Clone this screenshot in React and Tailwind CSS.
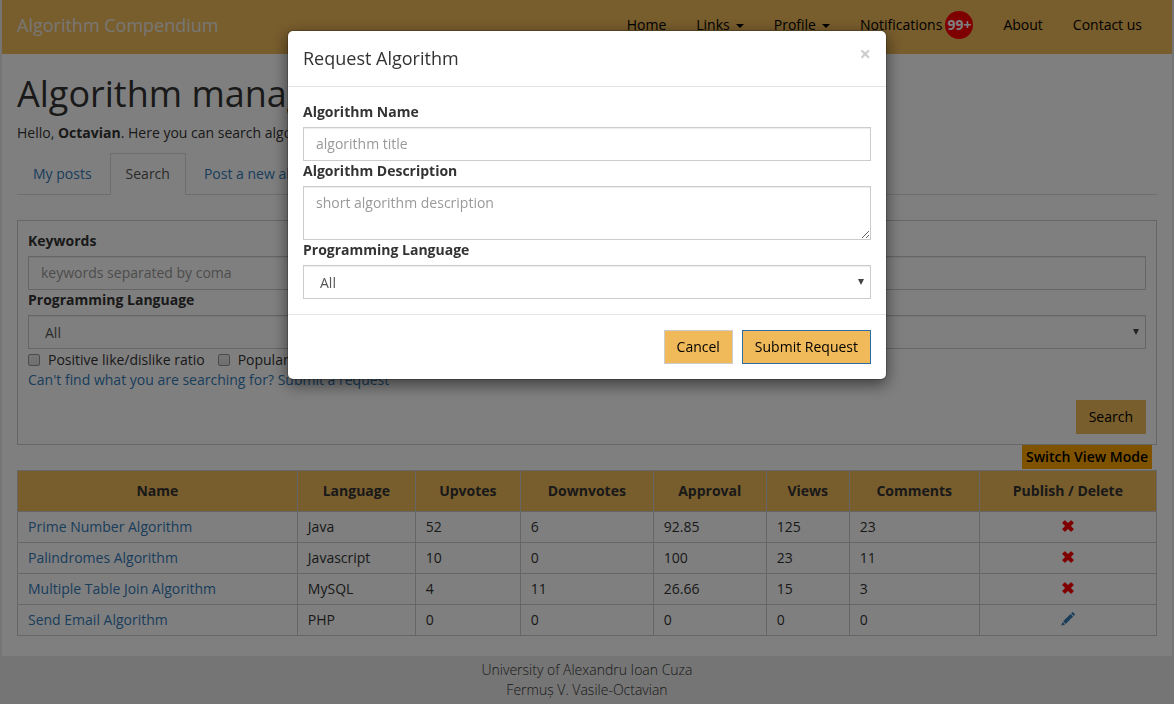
import React from "react";

const rows = [
  ["Prime Number Algorithm", "Java", "52", "6", "92.85", "125", "23", "delete"],
  ["Palindromes Algorithm", "Javascript", "10", "0", "100", "23", "11", "delete"],
  ["Multiple Table Join Algorithm", "MySQL", "4", "11", "26.66", "15", "3", "delete"],
  ["Send Email Algorithm", "PHP", "0", "0", "0", "0", "0", "publish"],
];

const columns = [
  ["Name", "w-[24.57%]"],
  ["Language", "w-[10.36%]"],
  ["Upvotes", "w-[9.22%]"],
  ["Downvotes", "w-[11.67%]"],
  ["Approval", "w-[9.92%]"],
  ["Views", "w-[7.28%]"],
  ["Comments", "w-[11.42%]"],
  ["Publish / Delete", "w-[15.56%]"],
];

const field =
  "block w-full border border-[#ccc] bg-white px-3 text-sm leading-5 text-[#555] placeholder-[#999] shadow-[inset_0_1px_1px_rgba(0,0,0,0.075)] outline-none";

function Caret() {
  return (
    <svg className="ml-1.5 inline-block h-1 w-2 align-middle" viewBox="0 0 8 4" aria-hidden="true">
      <path d="M0 0h8L4 4z" fill="currentColor" />
    </svg>
  );
}

function CrossIcon() {
  return (
    <svg className="h-3 w-3" viewBox="0 0 12 12" aria-hidden="true">
      <path
        d="M3.300.4 6 3.100 8.700.4q.4-.4.800 0l2.100 2.100q.4.400 0 .800L8.900 6l2.700 2.700q.4.400 0 .800L9.500 11.600q-.4.400-.8 0L6 8.900l-2.700 2.700q-.4.400-.8 0L.4 9.500q-.4-.4 0-.8L3.100 6 .4 3.300q-.4-.4 0-.8L2.500.4q.4-.4.800 0z"
        fill="#f00"
      />
    </svg>
  );
}

function PencilIcon() {
  return (
    <svg className="h-3.5 w-3.5" viewBox="0 0 14 14" fill="#337ab7" aria-hidden="true">
      <path d="M11 .4q.6-.6 1.200 0l1.400 1.400q.6.600 0 1.200l-.9.900L10.100 1.300z" />
      <path d="M9.500 1.900 12.100 4.500 4.700 11.900 2.100 9.300z" />
      <path d="M1.500 9.900 4.100 12.500.2 13.800z" />
    </svg>
  );
}

function LanguageSelect({ id }) {
  return (
    <div className="relative">
      <select id={id} className={`${field} h-[34px] appearance-none pt-0.5 pl-4`}>
        <option>All</option>
        <option>Java</option>
        <option>Javascript</option>
        <option>MySQL</option>
        <option>PHP</option>
      </select>
      <svg
        className="pointer-events-none absolute top-3.5 right-[7px] h-1.5 w-1.5"
        viewBox="0 0 6 6"
        aria-hidden="true"
      >
        <path d="M0 0h6L3 6z" fill="#444" />
      </svg>
    </div>
  );
}

function Label({ htmlFor, children }) {
  return (
    <label htmlFor={htmlFor} className="mb-[5px] block font-bold">
      {children}
    </label>
  );
}

function Check({ children }) {
  return (
    <label className="flex items-center gap-2">
      <input
        type="checkbox"
        className="h-3 w-3 appearance-none rounded-xs border border-[#999] bg-linear-to-b from-[#eee] to-[#ddd]"
      />
      {children}
    </label>
  );
}

function Navbar() {
  return (
    <header className="flex h-[54px] justify-between bg-[#f0ba5a] px-[15px] pb-1">
      <a href="#" className="flex items-center text-lg font-medium text-[#f1efe9]">
        Algorithm Compendium
      </a>
      <nav className="flex items-center gap-[30px] pr-[15px] text-black">
        <a href="#">Home</a>
        <a href="#">
          Links
          <Caret />
        </a>
        <a href="#">
          Profile
          <Caret />
        </a>
        <a href="#" className="flex items-center gap-[3px]">
          Notifications
          <span className="flex h-7 items-center rounded-full bg-[#f00] px-0.5 font-bold text-white">99+</span>
        </a>
        <a href="#">About</a>
        <a href="#">Contact us</a>
      </nav>
    </header>
  );
}

function Tabs() {
  const tab = "-mb-px border px-[15px] py-2.5";
  return (
    <nav className="mt-2.5 flex gap-0.5 border-b border-[#ddd]">
      <a href="#" className={`${tab} border-transparent text-[#337ab7]`}>
        My posts
      </a>
      <a href="#" className={`${tab} border-[#ddd] border-b-white bg-white text-[#555]`}>
        Search
      </a>
      <a href="#" className={`${tab} border-transparent text-[#337ab7]`}>
        Post a new algorithm
      </a>
    </nav>
  );
}

function SearchForm() {
  return (
    <form className="mt-[25px] border border-[#ccc] p-2.5">
      <Label htmlFor="keywords">Keywords</Label>
      <input id="keywords" type="text" placeholder="keywords separated by coma" className={`${field} h-[34px] pb-0.5`} />
      <Label htmlFor="language">Programming Language</Label>
      <LanguageSelect id="language" />
      <div className="mt-px flex gap-[13px]">
        <Check>Positive like/dislike ratio</Check>
        <Check>Popular</Check>
      </div>
      <a href="#" className="text-[#337ab7]">
        Can't find what you are searching for? Submit a request
      </a>
      <div className="mt-2.5 flex justify-end">
        <button type="button" className="h-[34px] bg-[#f0ba5a] px-[13px] text-black">
          Search
        </button>
      </div>
    </form>
  );
}

function Results() {
  return (
    <table className="mt-px w-full table-fixed border-collapse">
      <thead>
        <tr className="h-[41px] bg-[#f0ba5a]">
          {columns.map(([name, width]) => (
            <th key={name} className={`${width} border border-[#ccc] text-center font-bold`}>
              {name}
            </th>
          ))}
        </tr>
      </thead>
      <tbody>
        {rows.map((row) => (
          <tr key={row[0]} className="h-[31px]">
            <td className="border border-[#ccc] px-2.5">
              <a href="#" className="text-[#337ab7]">
                {row[0]}
              </a>
            </td>
            {row.slice(1, 7).map((value, i) => (
              <td key={i} className="border border-[#ccc] px-2.5">
                {value}
              </td>
            ))}
            <td className="border border-[#ccc] pb-0.5">
              <button type="button" aria-label={row[7]} className="mx-auto block">
                {row[7] === "delete" ? <CrossIcon /> : <PencilIcon />}
              </button>
            </td>
          </tr>
        ))}
      </tbody>
    </table>
  );
}

function RequestDialog() {
  return (
    <div className="fixed inset-0 overflow-hidden bg-black/50">
      <div
        role="dialog"
        aria-labelledby="dialog-title"
        className="mx-auto mt-[30px] max-w-[600px] rounded-md border border-black/20 bg-white bg-clip-padding shadow-[0_5px_15px_rgba(0,0,0,0.5)]"
      >
        <div className="flex items-start justify-between border-b border-[#e5e5e5] p-[15px]">
          <h2 id="dialog-title" className="text-lg leading-[25px]">
            Request Algorithm
          </h2>
          <button type="button" aria-label="Close" className="text-xl leading-4 font-bold text-[#ccc]">
            ×
          </button>
        </div>
        <form className="p-[15px]">
          <Label htmlFor="request-name">Algorithm Name</Label>
          <input id="request-name" type="text" placeholder="algorithm title" className={`${field} h-[34px] pb-0.5`} />
          <Label htmlFor="request-description">Algorithm Description</Label>
          <textarea
            id="request-description"
            placeholder="short algorithm description"
            className={`${field} h-[54px] py-1.5`}
          />
          <Label htmlFor="request-language">Programming Language</Label>
          <LanguageSelect id="request-language" />
        </form>
        <div className="flex justify-end gap-[9px] border-t border-[#e5e5e5] p-[15px]">
          <button type="button" className="h-[34px] border border-[#ccc] bg-[#f0ba5a] px-3 text-black">
            Cancel
          </button>
          <button type="button" className="h-[34px] border border-[#2e6da4] bg-[#f0ba5a] px-3 text-black">
            Submit Request
          </button>
        </div>
      </div>
    </div>
  );
}

export default function App() {
  return (
    <div className="flex min-h-screen flex-col bg-[#eaeaea] font-['Open_Sans','Noto_Sans',sans-serif] text-sm leading-5 text-[#333]">
      <div className="mx-0.5 bg-white">
        <Navbar />
        <main className="px-[15px] pt-5 pb-5">
          <h1 className="text-4xl leading-[39px]">Algorithm management</h1>
          <p className="mt-2.5">
            Hello, <strong>Octavian</strong>. Here you can search algorithms
          </p>
          <Tabs />
          <SearchForm />
          <div className="flex justify-end pr-[5px]">
            <button type="button" className="h-6 bg-[#ffa500] px-1 font-semibold text-black">
              Switch View Mode
            </button>
          </div>
          <Results />
        </main>
      </div>
      <footer className="py-1 text-center font-light">
        <p>University of Alexandru Ioan Cuza</p>
        <p>Fermuș V. Vasile-Octavian</p>
      </footer>
      <RequestDialog />
    </div>
  );
}
